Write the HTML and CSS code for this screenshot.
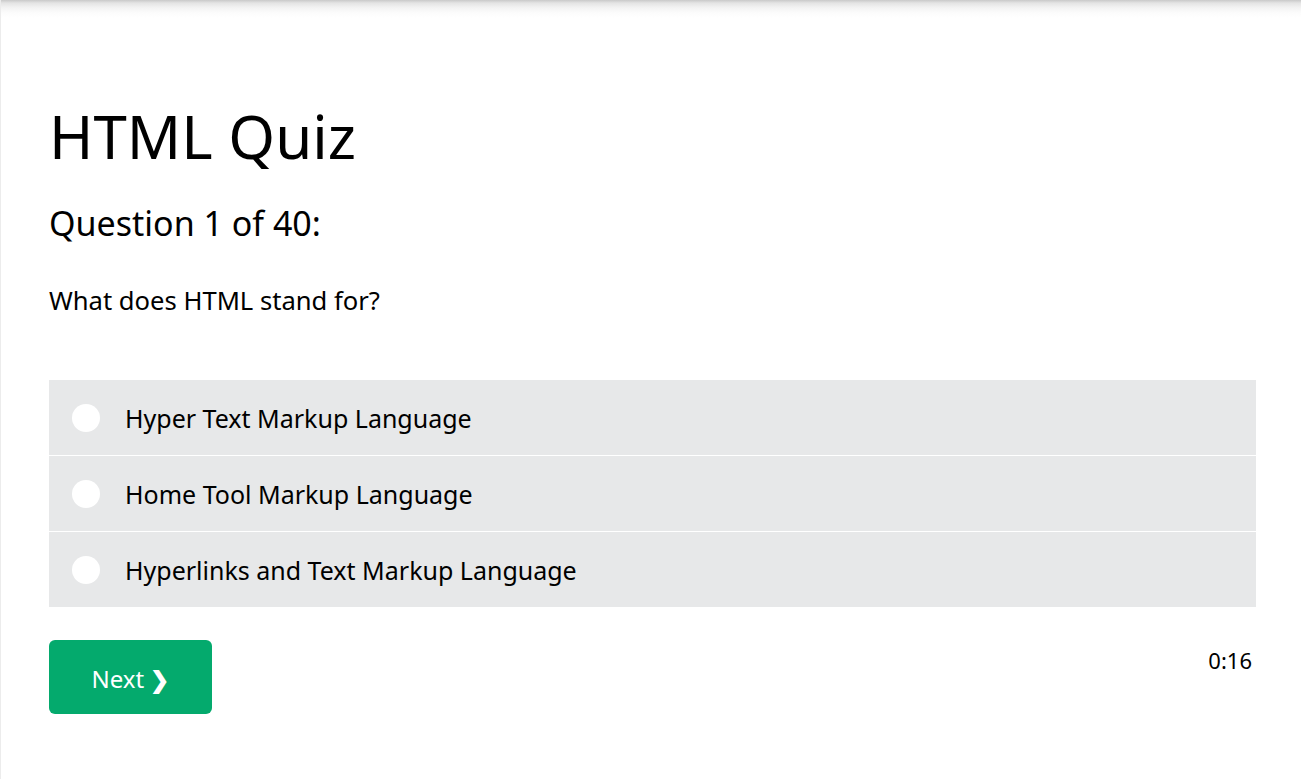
FILE: index.html
```html
<!DOCTYPE html>
<html lang="en">
<head>
<meta charset="utf-8">
<title>HTML Quiz</title>
<link rel="stylesheet" href="styles.css">
</head>
<body>
<div class="page">
  <main class="quiz">
    <h1 class="title">HTML Quiz</h1>
    <h2 class="qnum">Question 1 of 40:</h2>
    <p class="prompt">What does HTML stand for?</p>
    <div class="options">
      <label class="option"><span class="radio"></span><span class="opt-text">Hyper Text Markup Language</span></label>
      <label class="option"><span class="radio"></span><span class="opt-text">Home Tool Markup Language</span></label>
      <label class="option"><span class="radio"></span><span class="opt-text">Hyperlinks and Text Markup Language</span></label>
    </div>
    <div class="footer">
      <button class="next" type="button">Next <span class="chev">&#10095;</span></button>
      <span class="timer">0:16</span>
    </div>
  </main>
</div>
</body>
</html>
```

FILE: styles.css
```css
html, body {
  margin: 0;
  padding: 0;
}
body {
  font-family: "Noto Sans", "Open Sans", sans-serif;
  color: #000;
  background: #fff;
}
.page {
  min-height: 779px;
  box-sizing: border-box;
  border-left: 1px solid #ececec;
  background: linear-gradient(to bottom, #c9c9c9 0, #e4e4e4 3px, #f4f4f4 8px, #fcfcfc 13px, #fff 18px);
}
.quiz {
  padding: 96px 45px 0 48px;
}
.title {
  margin: 0;
  font-size: 60px;
  font-weight: 400;
  line-height: 80px;
}
.qnum {
  margin: 25px 0 0;
  font-size: 34px;
  font-weight: 400;
  line-height: 44px;
}
.prompt {
  margin: 40px 0 0;
  font-size: 25.6px;
  line-height: 32px;
}
.options {
  margin-top: 63px;
  display: flex;
  flex-direction: column;
  gap: 1px;
}
.option {
  display: flex;
  align-items: center;
  height: 75px;
  background: #e7e8e9;
  padding-left: 23px;
}
.radio {
  width: 28px;
  height: 28px;
  border-radius: 50%;
  background: #fff;
  flex: none;
}
.opt-text {
  margin-left: 25px;
  font-size: 25px;
}
.footer {
  margin-top: 33px;
  display: flex;
  justify-content: space-between;
  align-items: flex-start;
}
.next {
  width: 163px;
  height: 74px;
  border: 0;
  border-radius: 6px;
  background: #04aa6d;
  color: #fff;
  font-family: inherit;
  font-size: 24px;
  padding: 2px 0 0;
}
.chev {
  font-size: 23px;
  font-weight: 700;
}
.timer {
  font-size: 22px;
  margin-top: 5px;
  margin-right: 4px;
}
```
